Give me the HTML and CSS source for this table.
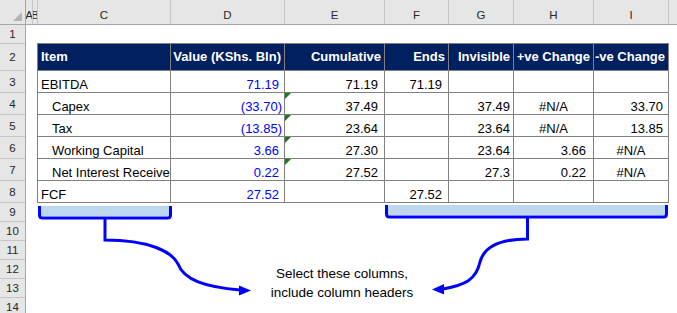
FILE: index.html
```html
<!DOCTYPE html>
<html>
<head>
<meta charset="utf-8">
<link rel="stylesheet" href="styles.css">
</head>
<body>
<div class="sheet">
  <div class="colheads">
    <div class="corner"><span class="tri"></span></div>
    <div class="ch">A</div>
    <div class="ch">B</div>
    <div class="ch">C</div>
    <div class="ch">D</div>
    <div class="ch">E</div>
    <div class="ch">F</div>
    <div class="ch">G</div>
    <div class="ch">H</div>
    <div class="ch">I</div>
    <div class="ch last"></div>
  </div>
  <div class="body">
    <div class="rowheads">
      <div class="rh r-small">1</div>
      <div class="rh r-head">2</div>
      <div class="rh r-row">3</div>
      <div class="rh r-row">4</div>
      <div class="rh r-row">5</div>
      <div class="rh r-row">6</div>
      <div class="rh r-row">7</div>
      <div class="rh r-row">8</div>
      <div class="rh r-small">9</div>
      <div class="rh r-small">10</div>
      <div class="rh r-small">11</div>
      <div class="rh r-small">12</div>
      <div class="rh r-small">13</div>
      <div class="rh r-small">14</div>
    </div>
    <div class="canvas">
      <div class="table">
        <div class="cell th left">Item</div>
        <div class="cell th">Value (KShs. Bln)</div>
        <div class="cell th">Cumulative</div>
        <div class="cell th">Ends</div>
        <div class="cell th">Invisible</div>
        <div class="cell th">+ve Change</div>
        <div class="cell th">-ve Change</div>

        <div class="cell label">EBITDA</div>
        <div class="cell num blue">71.19</div>
        <div class="cell num pad6">71.19</div>
        <div class="cell num pad6">71.19</div>
        <div class="cell"></div>
        <div class="cell"></div>
        <div class="cell"></div>

        <div class="cell label indent">Capex</div>
        <div class="cell num blue neg">(33.70)</div>
        <div class="cell num pad6 flag">37.49</div>
        <div class="cell"></div>
        <div class="cell num pad3">37.49</div>
        <div class="cell na">#N/A</div>
        <div class="cell num pad5">33.70</div>

        <div class="cell label indent">Tax</div>
        <div class="cell num blue neg">(13.85)</div>
        <div class="cell num pad6 flag">23.64</div>
        <div class="cell"></div>
        <div class="cell num pad3">23.64</div>
        <div class="cell na">#N/A</div>
        <div class="cell num pad5">13.85</div>

        <div class="cell label indent">Working Capital</div>
        <div class="cell num blue">3.66</div>
        <div class="cell num pad6 flag">27.30</div>
        <div class="cell"></div>
        <div class="cell num pad3">23.64</div>
        <div class="cell num pad7">3.66</div>
        <div class="cell na">#N/A</div>

        <div class="cell label indent">Net Interest Received</div>
        <div class="cell num blue">0.22</div>
        <div class="cell num pad6 flag">27.52</div>
        <div class="cell"></div>
        <div class="cell num pad3">27.3</div>
        <div class="cell num pad7">0.22</div>
        <div class="cell na">#N/A</div>

        <div class="cell label">FCF</div>
        <div class="cell num blue">27.52</div>
        <div class="cell"></div>
        <div class="cell num pad6">27.52</div>
        <div class="cell"></div>
        <div class="cell"></div>
        <div class="cell"></div>
      </div>
    </div>
  </div>

  <svg class="notes" width="677" height="313" viewBox="0 0 677 313">
    <rect x="41" y="206" width="128" height="10" fill="#bdd7ee"/>
    <path d="M39.5 206 V215 Q39.5 218 42.5 218 H167.5 Q170.5 218 170.5 215 V206" fill="none" stroke="#0000ff" stroke-width="3"/>
    <path d="M105 218 V240 C150 240 172 252 178 264 C184 280 205 287 240 290" fill="none" stroke="#0000ff" stroke-width="3"/>
    <polygon points="251,290.5 239,285.5 239,295.5" fill="#0000ff"/>

    <rect x="388" y="205" width="277" height="10" fill="#bdd7ee"/>
    <path d="M386.5 205 V214 Q386.5 217 389.5 217 H663.5 Q666.5 217 666.5 214 V205" fill="none" stroke="#0000ff" stroke-width="3"/>
    <path d="M527.5 217 V239 C500 239 484 247 480 262 C476 280 465 285 443 289" fill="none" stroke="#0000ff" stroke-width="3"/>
    <polygon points="432,289.5 444,284 444,294.5" fill="#0000ff"/>
  </svg>
  <div class="note-text">Select these columns,<br>include column headers</div>
</div>
</body>
</html>
```

FILE: styles.css
```css
* { box-sizing: border-box; }

html, body {
  margin: 0;
  padding: 0;
  background: #ffffff;
}

.sheet {
  position: relative;
  width: 677px;
  height: 313px;
  overflow: hidden;
  font-family: "Liberation Sans", Arial, sans-serif;
  background: #ffffff;
}

/* column headers */
.colheads {
  display: grid;
  grid-template-columns: 26px 7px 5px 133px 114px 100px 64px 65px 80px 75px 1fr;
  height: 25px;
  background: #e6e6e6;
  border-bottom: 1px solid #a6a6a6;
}

.corner {
  position: relative;
  border-right: 1px solid #a6a6a6;
}

.corner .tri {
  position: absolute;
  right: 3px;
  bottom: 3px;
  width: 0;
  height: 0;
  border-left: 9px solid transparent;
  border-bottom: 9px solid #b4b4b4;
}

.ch {
  display: flex;
  align-items: center;
  justify-content: center;
  padding-top: 6px;
  border-right: 1px solid #c6c6c6;
  overflow: hidden;
  white-space: nowrap;
  font-size: 11.5px;
  color: #262626;
}

.ch.last { border-right: none; }

/* body */
.body {
  display: flex;
}

.rowheads {
  width: 26px;
  flex: none;
  display: flex;
  flex-direction: column;
  background: #e6e6e6;
  border-right: 1px solid #a6a6a6;
}

.rh {
  display: flex;
  align-items: center;
  justify-content: center;
  border-bottom: 1px solid #c6c6c6;
  font-size: 11.5px;
  color: #262626;
}

.r-small { height: 19px; }
.r-head { height: 27px; }
.r-row { height: 22px; }

.canvas {
  flex: 1;
  padding-top: 18px;
  padding-left: 11px;
  background: #ffffff;
}

/* data table */
.table {
  display: grid;
  grid-template-columns: 132px 113px 99px 63px 64px 79px 74px;
  grid-template-rows: 26px repeat(6, 21px);
  gap: 1px;
  width: max-content;
  background: #808080;
  border: 1px solid #808080;
}

.cell {
  position: relative;
  display: flex;
  align-items: flex-end;
  padding: 0 3px;
  background: #ffffff;
  overflow: hidden;
  white-space: nowrap;
  font-size: 13px;
  line-height: 15px;
  color: #000000;
}

.th {
  align-items: center;
  justify-content: flex-end;
  padding: 0 3px 1px 3px;
  background: #002060;
  color: #ffffff;
  font-weight: bold;
}

.th.left { justify-content: flex-start; }

.label.indent { padding-left: 14px; }

.num { justify-content: flex-end; }
.blue { color: #0000ff; padding-right: 5px; }
.blue.neg { padding-right: 2px; }
.pad3 { padding-right: 3px; }
.pad5 { padding-right: 5px; }
.pad6 { padding-right: 6px; }
.pad7 { padding-right: 7px; }

.na { justify-content: center; }

.flag::before {
  content: "";
  position: absolute;
  top: 0;
  left: 0;
  width: 0;
  height: 0;
  border-top: 6px solid #1a7a1a;
  border-right: 6px solid transparent;
}

/* annotation overlay */
.notes {
  position: absolute;
  top: 0;
  left: 0;
  pointer-events: none;
}

.note-text {
  position: absolute;
  left: 242px;
  top: 264px;
  width: 200px;
  text-align: center;
  font-size: 13.5px;
  line-height: 19px;
  color: #000000;
}
```
